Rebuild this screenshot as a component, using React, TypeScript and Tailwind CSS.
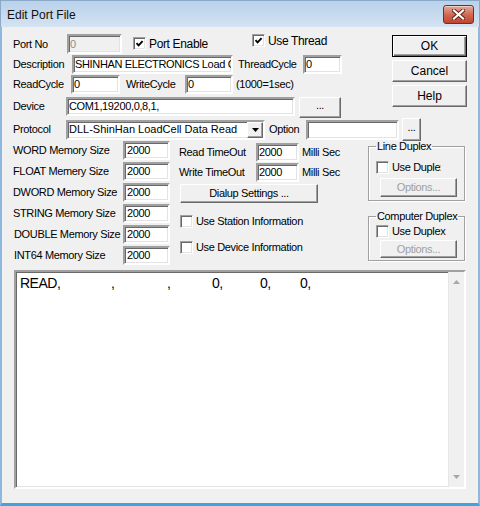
import type { ReactNode } from "react";

const sunken =
  "border-2 border-t-[#a0a0a0] border-l-[#a0a0a0] border-b-white border-r-white shadow-[inset_1px_1px_0_#696969,inset_-1px_-1px_0_#e3e3e3]";

const raised =
  "border border-t-white border-l-white border-b-[#696969] border-r-[#696969] shadow-[inset_-1px_-1px_0_#a0a0a0] bg-[#f0f0f0]";

function Edit({
  value = "",
  disabled = false,
  className = "",
}: {
  value?: string;
  disabled?: boolean;
  className?: string;
}) {
  const tone = disabled ? "bg-[#f0f0f0] text-[#8d8d8d]" : "bg-white text-black";
  return (
    <div
      className={`${sunken} ${tone} flex shrink-0 items-center overflow-hidden whitespace-nowrap pl-[1px] ${className}`}
    >
      {value}
    </div>
  );
}

function Btn({
  children,
  disabled = false,
  className = "",
}: {
  children: ReactNode;
  disabled?: boolean;
  className?: string;
}) {
  const tone = disabled ? "text-[#a0a0a0]" : "text-black";
  return (
    <div className={`${raised} ${tone} flex shrink-0 items-center justify-center ${className}`}>
      {children}
    </div>
  );
}

function Check({
  checked = false,
  label,
  className = "",
}: {
  checked?: boolean;
  label: string;
  className?: string;
}) {
  return (
    <div className={`flex shrink-0 items-center whitespace-nowrap ${className}`}>
      <span className="flex h-[13px] w-[13px] shrink-0 items-center justify-center border border-t-[#a0a0a0] border-l-[#a0a0a0] border-b-white border-r-white bg-white shadow-[inset_1px_1px_0_#696969,inset_-1px_-1px_0_#e3e3e3]">
        {checked && (
          <svg width="9" height="9" viewBox="0 0 9 9">
            <path d="M1.5 4.2 L3.6 6.3 L7.6 2.2" fill="none" stroke="#000" strokeWidth="1.9" />
          </svg>
        )}
      </span>
      <span className="ml-[3px]">{label}</span>
    </div>
  );
}

function Label({ children, className = "" }: { children: ReactNode; className?: string }) {
  return (
    <span className={`flex shrink-0 items-center whitespace-nowrap ${className}`}>{children}</span>
  );
}

function MemRow({ label, indent = false }: { label: string; indent?: boolean }) {
  return (
    <div className="flex h-[21px] items-start">
      <Label className={`h-[19px] w-[110px] ${indent ? "pl-[1px]" : ""}`}>{label}</Label>
      <Edit value="2000" className="h-[19px] w-[47px] pl-[2px]" />
    </div>
  );
}

function Arrow({ up }: { up: boolean }) {
  return (
    <svg width="7" height="4" viewBox="0 0 7 4">
      <path d={up ? "M0 4 L3.5 0 L7 4 Z" : "M0 0 L7 0 L3.5 4 Z"} fill="#a8a8a8" />
    </svg>
  );
}

export default function App() {
  return (
    <div className="flex h-[506px] w-[480px] flex-col overflow-hidden bg-[#f0f0f0] font-['Liberation_Sans',Arial,sans-serif] text-[11px] leading-none tracking-[-0.35px] text-black">
      {/* title bar */}
      <div className="flex h-[27px] shrink-0 items-start justify-between border-x border-t border-[#8aa9c8] bg-gradient-to-b from-[#b9d1ea] to-[#d4e3f2] pl-[6px] pr-[5px]">
        <span className="mt-[8px] text-[12px] tracking-normal text-[#111]">Edit Port File</span>
        <div className="mt-[4px] flex h-[19px] w-[31px] items-center justify-center rounded-[3px] border border-[#7a2a1e] bg-gradient-to-b from-[#e2a99b] via-[#cf6a55] to-[#c0442c] shadow-[inset_0_1px_0_#f2cfc6]">
          <svg width="13" height="11" viewBox="0 0 13 11">
            <path d="M2 1.5 L11 9.5 M11 1.5 L2 9.5" stroke="#5b2218" strokeWidth="4" strokeLinecap="square" />
            <path d="M2 1.5 L11 9.5 M11 1.5 L2 9.5" stroke="#fff" strokeWidth="2.2" strokeLinecap="square" />
          </svg>
        </div>
      </div>

      {/* body */}
      <div className="flex flex-1 flex-col border-x-2 border-b-[3px] border-x-[#8fb8de] border-b-[#3aa6df] px-[11px]">
        {/* top section */}
        <div className="mt-[7px] flex h-[84px]">
          <div className="flex w-[329px] flex-col">
            <div className="flex h-[20px] items-start">
              <Label className="h-[20px] w-[54px]">Port No</Label>
              <Edit value="0" disabled className="h-[20px] w-[55px]" />
              <Check checked label="Port Enable" className="ml-[11px] mt-[3px] w-[119px] text-[12px]" />
              <Check checked label="Use Thread" className="text-[12px]" />
            </div>
            <div className="flex h-[20px] items-center">
              <Label className="w-[59px]">Description</Label>
              <Edit value="SHINHAN ELECTRONICS Load Ce" className="h-[19px] w-[161px]" />
              <Label className="ml-[5px] w-[65px]">ThreadCycle</Label>
              <Edit value="0" className="h-[19px] w-[39px]" />
            </div>
            <div className="mt-[1px] flex h-[19px] items-center">
              <Label className="w-[58px]">ReadCycle</Label>
              <Edit value="0" className="h-[19px] w-[49px]" />
              <Label className="ml-[6px] w-[59px]">WriteCycle</Label>
              <Edit value="0" className="h-[19px] w-[48px]" />
              <Label className="ml-[3px]">(1000=1sec)</Label>
            </div>
            <div className="mt-[3px] flex h-[21px] items-start">
              <Label className="h-[19px] w-[53px]">Device</Label>
              <Edit value="COM1,19200,0,8,1," className="h-[19px] w-[229px]" />
              <Btn className="ml-[4px] h-[21px] w-[42px] pb-[4px]">...</Btn>
            </div>
          </div>
          <div className="ml-auto mt-[1px] flex w-[75px] flex-col gap-[3px] text-[12px] tracking-normal">
            <div className="flex h-[22px] items-center justify-center border border-black bg-[#f0f0f0] shadow-[inset_1px_1px_0_#fff,inset_-1px_-1px_0_#696969,inset_-2px_-2px_0_#a0a0a0]">
              OK
            </div>
            <Btn className="h-[22px]">Cancel</Btn>
            <Btn className="h-[22px]">Help</Btn>
          </div>
        </div>

        {/* protocol row */}
        <div className="flex h-[23px] items-center">
          <Label className="w-[53px]">Protocol</Label>
          <div className={`${sunken} flex h-[20px] w-[199px] shrink-0 items-center justify-between bg-white`}>
            <span className="pl-[1px] tracking-normal">DLL-ShinHan LoadCell Data Read</span>
            <Btn className="h-[16px] w-[16px]">
              <svg width="7" height="4" viewBox="0 0 7 4">
                <path d="M0 0 L7 0 L3.5 4 Z" fill="#000" />
              </svg>
            </Btn>
          </div>
          <Label className="ml-[4px] w-[37px]">Option</Label>
          <Edit className="h-[20px] w-[93px]" />
          <Btn className="ml-[3px] h-[23px] w-[19px] pb-[4px]">...</Btn>
        </div>

        {/* lower section */}
        <div className="flex">
          <div className="flex w-[157px] flex-col">
            <MemRow label="WORD Memory Size" />
            <MemRow label="FLOAT Memery Size" />
            <MemRow label="DWORD Memory Size" />
            <MemRow label="STRING Memory Size" />
            <MemRow label="DOUBLE Memory Size" indent />
            <MemRow label="INT64 Memory Size" indent />
          </div>

          <div className="ml-[9px] flex flex-col">
            <div className="mt-[2px] flex h-[19px] items-center">
              <Label className="w-[77px]">Read TimeOut</Label>
              <Edit value="2000" className="h-[19px] w-[43px]" />
              <Label className="ml-[3px]">Milli Sec</Label>
            </div>
            <div className="mt-[1px] flex h-[19px] items-center">
              <Label className="w-[77px]">Write TimeOut</Label>
              <Edit value="2000" className="h-[19px] w-[43px]" />
              <Label className="ml-[3px]">Milli Sec</Label>
            </div>
            <Btn className="ml-[1px] mt-[2px] h-[19px] w-[138px]">Dialup Settings ...</Btn>
            <Check label="Use Station Information" className="ml-[1px] mt-[12px]" />
            <Check label="Use Device Information" className="ml-[1px] mt-[13px]" />
          </div>

          <div className="ml-auto mr-[2px] flex w-[97px] flex-col">
            <fieldset className="h-[60px] border border-[#a0a0a0] shadow-[1px_1px_0_#fff,inset_1px_1px_0_#fff]">
              <legend className="ml-[7px] px-[1px]">Line Duplex</legend>
              <div className="ml-[7px] mt-[9px] w-[65px] overflow-hidden">
                <Check label="Use Duplex" />
              </div>
              <Btn disabled className="ml-[11px] mt-[4px] h-[19px] w-[77px]">
                Options...
              </Btn>
            </fieldset>
            <fieldset className="mt-[10px] h-[50px] border border-[#a0a0a0] shadow-[1px_1px_0_#fff,inset_1px_1px_0_#fff]">
              <legend className="ml-[7px] px-[1px]">Computer Duplex</legend>
              <Check label="Use Duplex" className="ml-[7px] mt-[3px]" />
              <Btn disabled className="ml-[11px] mt-[2px] h-[18px] w-[77px]">
                Options...
              </Btn>
            </fieldset>
          </div>
        </div>

        {/* text area */}
        <div className={`${sunken} ml-[1px] mt-[3px] flex h-[219px] w-[452px] bg-white`}>
          <div className="flex flex-1 items-start pl-[4px] pt-[4px] font-['Liberation_Sans_Narrow','Liberation_Sans',sans-serif] text-[14px] leading-[14px] tracking-[-0.5px]">
            <span className="inline-block w-[91px]">READ,</span>
            <span className="inline-block w-[56px]">,</span>
            <span className="inline-block w-[45px]">,</span>
            <span className="inline-block w-[48px]">0,</span>
            <span className="inline-block w-[40px]">0,</span>
            <span className="inline-block">0,</span>
          </div>
          <div className="flex w-[16px] flex-col items-center justify-between border-l border-[#e6e6e6] bg-[#f0f0f0] py-[8px]">
            <Arrow up />
            <Arrow up={false} />
          </div>
        </div>
      </div>
    </div>
  );
}
